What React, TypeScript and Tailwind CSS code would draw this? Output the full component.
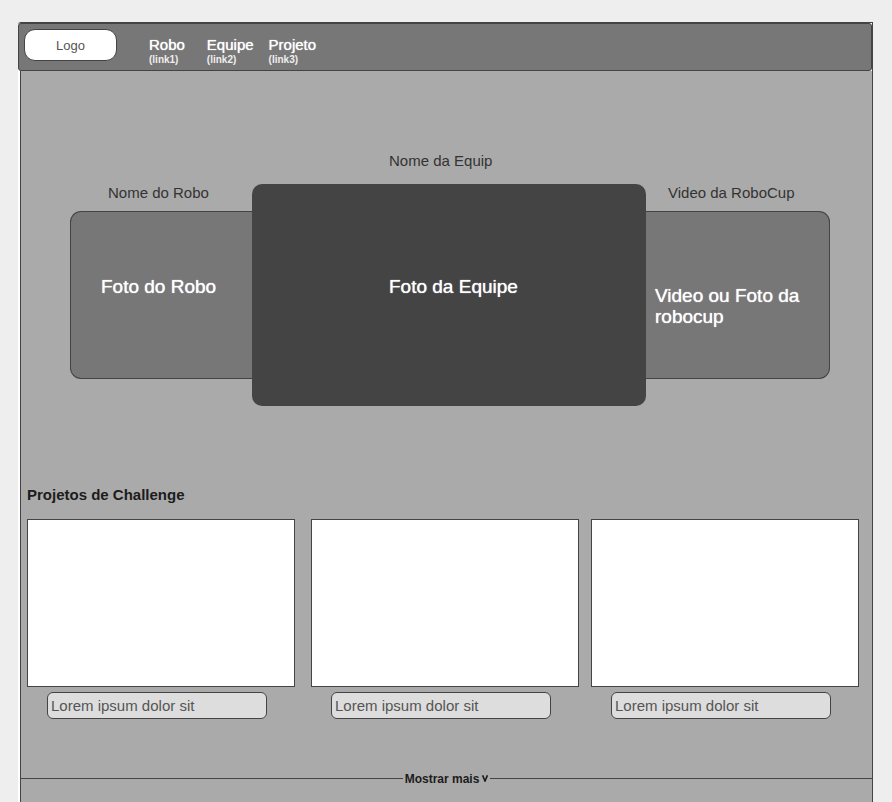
import React from "react";

const links = [
  { label: "Robo", note: "(link1)", href: "#robo" },
  { label: "Equipe", note: "(link2)", href: "#equipe" },
  { label: "Projeto", note: "(link3)", href: "#projeto" },
];

const glow = "[text-shadow:0_0_1px_#fff]";

function Header() {
  return (
    <header className="flex h-12 items-start rounded-[3px] border border-[#444] bg-[#777] pl-[5px]">
      <a
        href="#"
        className="mt-[5px] flex h-8 w-[93px] items-center justify-center rounded-[11px] border border-[#444] bg-white pt-[2px] text-[13px] text-[#555]"
      >
        Logo
      </a>
      <nav className="mt-3 ml-8 flex gap-x-[15px]">
        {links.map((link, i) => (
          <a key={link.label} href={link.href} className={i === 0 ? "mr-[7px] text-white" : "text-white"}>
            <span className={`block text-[15px] leading-[18px] ${glow}`}>{link.label}</span>
            <span className="block text-[10px] leading-3 font-bold text-[#eee]">{link.note}</span>
          </a>
        ))}
      </nav>
    </header>
  );
}

function Hero() {
  return (
    <section className="ml-[49px] mr-[42px] grid grid-cols-[182px_1fr_184px] items-end pt-20">
      <figure id="robo" className="mb-[27px]">
        <figcaption className="mb-2 pl-[38px] text-[15px] leading-5">Nome do Robo</figcaption>
        <div className={`flex h-[168px] items-center rounded-l-[11px] border border-r-0 border-[#444] bg-[#777] pb-[18px] pl-[30px] text-[19px] leading-[21px] text-white ${glow}`}>
          Foto do Robo
        </div>
      </figure>
      <figure id="equipe">
        <figcaption className="mb-[13px] pl-[137px] text-[15px] leading-5">Nome da Equip</figcaption>
        <div className={`flex h-[222px] items-center rounded-[10px] bg-[#444] pb-[18px] pl-[137px] text-[19px] leading-[21px] text-white ${glow}`}>
          Foto da Equipe
        </div>
      </figure>
      <figure className="mb-[27px]">
        <figcaption className="mb-2 pl-[22px] text-[15px] leading-5">Video da RoboCup</figcaption>
        <div className={`flex h-[168px] items-center rounded-r-[11px] border border-l-0 border-[#444] bg-[#777] pt-[22px] pr-6 pl-[9px] text-[19px] leading-[21px] text-white ${glow}`}>
          Video ou Foto da robocup
        </div>
      </figure>
    </section>
  );
}

function Card() {
  return (
    <figure className="flex-1">
      <div className="h-[168px] border border-[#444] bg-white" />
      <figcaption className="mt-[5px] ml-5 flex h-[27px] w-[220px] items-center rounded-md border border-[#444] bg-[#ddd] pt-[2px] pl-[3px] text-[15px] text-[#555]">
        Lorem ipsum dolor sit
      </figcaption>
    </figure>
  );
}

export default function App() {
  return (
    <div className="flex min-h-screen flex-col bg-[#eee] pt-[22px] pr-[19px] pl-[18px] font-['Liberation_Sans',Arial,sans-serif] text-[#333]">
      <div className="flex flex-1 flex-col rounded-tl-[3px] border-t border-r border-[#444] bg-white">
        <Header />
        <main className="ml-[2px] flex-1 border-l border-[#444] bg-[#aaa]">
          <Hero />
          <section id="projeto" className="mt-[79px] pr-[13px] pl-[6px]">
            <h2 className="mb-[14px] text-[15px] leading-5 font-bold text-[#1c1c1c]">Projetos de Challenge</h2>
            <div className="flex">
              <Card />
              <div className="w-4" />
              <Card />
              <div className="w-3" />
              <Card />
            </div>
          </section>
          <div className="mt-[50px] flex items-center gap-[2px]">
            <div className="h-px flex-1 bg-[#444]" />
            <button type="button" className="flex gap-[3px] pt-[2px] text-[12px] leading-4 font-bold text-[#1c1c1c]">
              Mostrar mais
              <svg className="mt-1 h-[7px] w-[6px]" viewBox="0 0 6 7" fill="none" stroke="currentColor" strokeWidth="1.6" aria-hidden="true">
                <path d="M0.6 0.3 L3 6 L5.4 0.3" />
              </svg>
            </button>
            <div className="h-px flex-1 bg-[#444]" />
          </div>
        </main>
      </div>
    </div>
  );
}
